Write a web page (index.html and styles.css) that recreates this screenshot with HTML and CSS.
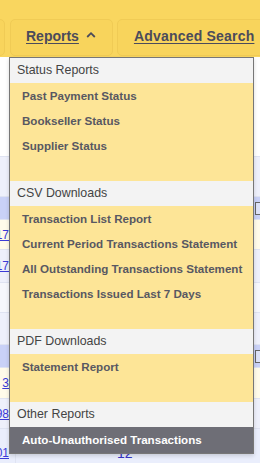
FILE: index.html
```html
<!DOCTYPE html>
<html lang="en">
<head>
    <meta charset="UTF-8">
    <meta name="viewport" content="width=device-width, initial-scale=1.0">
    <title>Reports</title>
    <link rel="stylesheet" href="styles.css">
</head>
<body>
    <div class="page">
        <div class="nav-bar">
            <div class="nav-tab nav-tab-prev"></div>
            <div class="nav-tab">
                <span class="nav-link">Reports</span>
                <svg class="caret" width="10" height="7" viewBox="0 0 10 7">
                    <path d="M1.2 6 L5 2.2 L8.8 6" fill="none" stroke="#4b4b5b" stroke-width="1.8"/>
                </svg>
            </div>
            <div class="nav-tab">
                <span class="nav-link nav-link-wide">Advanced Search</span>
            </div>
        </div>

        <div class="content">
            <div class="row row-white"></div>
            <div class="row row-lav row-tall"></div>
            <div class="row row-head"><span class="cell-first"></span><span class="check"></span></div>
            <div class="row row-cream"><span class="cell-first"><a href="#">17</a></span></div>
            <div class="row row-lav row-33"><span class="cell-first"><a href="#">17</a></span></div>
            <div class="row row-light"></div>
            <div class="row row-lav row-32"></div>
            <div class="row row-head row-27"><span class="cell-first"></span><span class="check"></span></div>
            <div class="row row-cream row-31"><span class="cell-first"><a href="#">3</a></span></div>
            <div class="row row-lav"><span class="cell-first"><a href="#">98</a></span></div>
            <div class="row row-blue"><span class="cell-first"><a href="#">01</a></span><span class="cell-num">12</span></div>
        </div>

        <!-- reports dropdown, open -->
        <div class="dropdown">
            <div class="dd-header">Status Reports</div>
            <div class="dd-group">
                <div class="dd-item">Past Payment Status</div>
                <div class="dd-item">Bookseller Status</div>
                <div class="dd-item">Supplier Status</div>
            </div>
            <div class="dd-header">CSV Downloads</div>
            <div class="dd-group">
                <div class="dd-item">Transaction List Report</div>
                <div class="dd-item">Current Period Transactions Statement</div>
                <div class="dd-item">All Outstanding Transactions Statement</div>
                <div class="dd-item">Transactions Issued Last 7 Days</div>
            </div>
            <div class="dd-header">PDF Downloads</div>
            <div class="dd-group">
                <div class="dd-item">Statement Report</div>
            </div>
            <div class="dd-header">Other Reports</div>
            <div class="dd-item active">Auto-Unauthorised Transactions</div>
        </div>
    </div>
</body>
</html>
```

FILE: styles.css
```css
body {
    margin: 0;
    font-family: 'Liberation Sans', Arial, sans-serif;
    background: #eef1fb;
    overflow: hidden;
}

.page {
    position: relative;
    width: 260px;
    height: 463px;
    overflow: hidden;
}

.nav-bar {
    height: 57px;
    background: #f9d65f;
    display: flex;
    align-items: flex-end;
    gap: 4px;
    overflow: hidden;
    box-sizing: border-box;
    padding-bottom: 1px;
}

.nav-tab {
    flex-shrink: 0;
    height: 37px;
    box-sizing: border-box;
    border: 1px solid #f0cb55;
    border-radius: 5px;
    background: #f8d45c;
    display: flex;
    align-items: center;
    padding: 0 16px 4px 15px;
}

.nav-tab-prev {
    width: 40px;
    margin-left: -35px;
    margin-right: 1px;
}

.nav-link {
    font-size: 14px;
    font-weight: bold;
    color: #4b4b5b;
    text-decoration: underline;
    text-underline-offset: 2px;
    white-space: nowrap;
}

.nav-link-wide {
    letter-spacing: 0.2px;
    margin-left: 1px;
}

.caret {
    margin-left: 7px;
    margin-bottom: 3px;
}

.content {
    display: flex;
    flex-direction: column;
}

.row {
    flex-shrink: 0;
    display: flex;
    align-items: center;
    border-bottom: 1px solid #dfe3f2;
    font-size: 12px;
    height: 29px;
}

.row-white { height: 99px; background: #fff; }
.row-lav { background: #eef0fb; }
.row-tall { height: 39px; }
.row-33 { height: 32px; }
.row-32 { height: 31px; }
.row-31 { height: 30px; }
.row-27 { height: 26px; }
.row-light { background: #f6f7fc; }
.row-cream { background: #fffbea; }
.row-head { height: 22px; background: #c9d1f7; justify-content: space-between; }
.row-blue { height: 40px; background: #eaeefc; align-items: flex-start; }

.cell-first {
    width: 16px;
    box-sizing: border-box;
    height: 100%;
    display: flex;
    align-items: center;
    justify-content: flex-end;
    padding-right: 6px;
    border-right: 1px solid #dfe3f2;
}

.row-blue .cell-first {
    align-items: flex-start;
    padding-top: 17px;
}

.cell-first a {
    color: #3b3bd8;
}

.cell-num {
    margin-left: 101px;
    padding-top: 16px;
    color: #3535c8;
    font-size: 14px;
}

.check {
    width: 9px;
    height: 11px;
    border: 1px solid #666;
    background: #dde2f8;
    margin-right: -6px;
}

.dropdown {
    position: absolute;
    top: 57px;
    left: 9px;
    width: 243px;
    border: 1px solid #777;
    background: #f3f3f3;
    box-shadow: 0 2px 4px rgba(0, 0, 0, 0.15);
}

.dd-header {
    height: 25px;
    line-height: 25px;
    padding-left: 7px;
    font-size: 12.4px;
    color: #444;
    background: #f3f3f3;
}

.dd-group {
    background: #fde597;
    padding-bottom: 23px;
}

.dd-item {
    height: 25px;
    line-height: 25px;
    padding-left: 12px;
    font-size: 11.6px;
    font-weight: bold;
    color: #585862;
    white-space: nowrap;
}

.dd-item.active {
    height: 26px;
    background: #6e6e76;
    color: #fff;
}
```
